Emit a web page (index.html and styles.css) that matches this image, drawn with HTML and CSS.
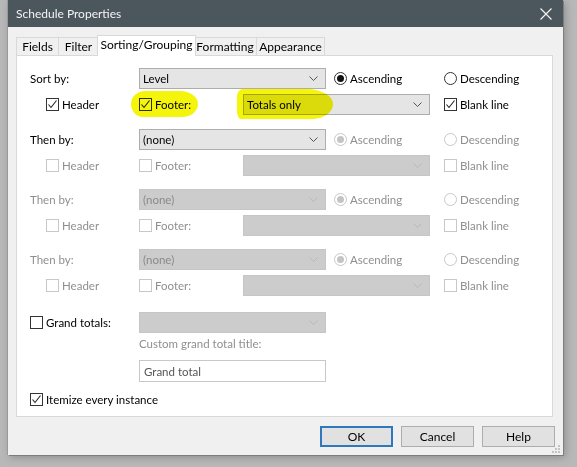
FILE: index.html
```html
<!DOCTYPE html>
<html>
<head>
<meta charset="utf-8">
<link rel="stylesheet" href="styles.css">
</head>
<body>
<div class="window">
  <div class="titlebar">
    <span class="title">Schedule Properties</span>
    <svg class="close" width="12" height="12" viewBox="0 0 12 12"><path d="M0.5 0.5 L11.5 11.5 M11.5 0.5 L0.5 11.5" stroke="#f2f2f2" stroke-width="1.2" fill="none"/></svg>
  </div>
  <div class="tabs">
    <div class="tab w-fields">Fields</div>
    <div class="tab w-filter">Filter</div>
    <div class="tab sel w-sort">Sorting/Grouping</div>
    <div class="tab w-fmt">Formatting</div>
    <div class="tab w-app">Appearance</div>
  </div>
  <div class="panel">
    <div class="hl hl1"></div>
    <div class="hl hl2"></div>

    <div class="group g1">
      <span class="lbl c12">Sort by:</span>
      <div class="dd c34"><span>Level</span><svg class="arr" width="9" height="5" viewBox="0 0 9 5"><path d="M0.5 0.5 L4.5 4.5 L8.5 0.5" stroke="#555" fill="none"/></svg></div>
      <span class="opt c6"><span class="radio on"></span>Ascending</span>
      <span class="opt c8"><span class="radio"></span>Descending</span>
      <span class="opt c2"><span class="chk"><svg width="11" height="11" viewBox="0 0 11 11"><path d="M1.5 5.5 L4 8.5 L9.5 1.5" stroke="#222" stroke-width="1.1" fill="none"/></svg></span>Header</span>
      <span class="opt c3"><span class="chk"><svg width="11" height="11" viewBox="0 0 11 11"><path d="M1.5 5.5 L4 8.5 L9.5 1.5" stroke="#222" stroke-width="1.1" fill="none"/></svg></span>Footer:</span>
      <div class="dd c46"><span>Totals only</span><svg class="arr" width="9" height="5" viewBox="0 0 9 5"><path d="M0.5 0.5 L4.5 4.5 L8.5 0.5" stroke="#555" fill="none"/></svg></div>
      <span class="opt c8"><span class="chk"><svg width="11" height="11" viewBox="0 0 11 11"><path d="M1.5 5.5 L4 8.5 L9.5 1.5" stroke="#222" stroke-width="1.1" fill="none"/></svg></span>Blank line</span>
    </div>

    <div class="group">
      <span class="lbl c12">Then by:</span>
      <div class="dd c34"><span>(none)</span><svg class="arr" width="9" height="5" viewBox="0 0 9 5"><path d="M0.5 0.5 L4.5 4.5 L8.5 0.5" stroke="#555" fill="none"/></svg></div>
      <span class="opt dis c6"><span class="radio on"></span>Ascending</span>
      <span class="opt dis c8"><span class="radio"></span>Descending</span>
      <span class="opt dis c2"><span class="chk"></span>Header</span>
      <span class="opt dis c3"><span class="chk"></span>Footer:</span>
      <div class="dd off c46"><span></span><svg class="arr" width="9" height="5" viewBox="0 0 9 5"><path d="M0.5 0.5 L4.5 4.5 L8.5 0.5" stroke="#b8b8b8" fill="none"/></svg></div>
      <span class="opt dis c8"><span class="chk"></span>Blank line</span>
    </div>

    <div class="group">
      <span class="lbl dis c12">Then by:</span>
      <div class="dd off c34"><span>(none)</span><svg class="arr" width="9" height="5" viewBox="0 0 9 5"><path d="M0.5 0.5 L4.5 4.5 L8.5 0.5" stroke="#b8b8b8" fill="none"/></svg></div>
      <span class="opt dis c6"><span class="radio on"></span>Ascending</span>
      <span class="opt dis c8"><span class="radio"></span>Descending</span>
      <span class="opt dis c2"><span class="chk"></span>Header</span>
      <span class="opt dis c3"><span class="chk"></span>Footer:</span>
      <div class="dd off c46"><span></span><svg class="arr" width="9" height="5" viewBox="0 0 9 5"><path d="M0.5 0.5 L4.5 4.5 L8.5 0.5" stroke="#b8b8b8" fill="none"/></svg></div>
      <span class="opt dis c8"><span class="chk"></span>Blank line</span>
    </div>

    <div class="group last">
      <span class="lbl dis c12">Then by:</span>
      <div class="dd off c34"><span>(none)</span><svg class="arr" width="9" height="5" viewBox="0 0 9 5"><path d="M0.5 0.5 L4.5 4.5 L8.5 0.5" stroke="#b8b8b8" fill="none"/></svg></div>
      <span class="opt dis c6"><span class="radio on"></span>Ascending</span>
      <span class="opt dis c8"><span class="radio"></span>Descending</span>
      <span class="opt dis c2"><span class="chk"></span>Header</span>
      <span class="opt dis c3"><span class="chk"></span>Footer:</span>
      <div class="dd off c46"><span></span><svg class="arr" width="9" height="5" viewBox="0 0 9 5"><path d="M0.5 0.5 L4.5 4.5 L8.5 0.5" stroke="#b8b8b8" fill="none"/></svg></div>
      <span class="opt dis c8"><span class="chk"></span>Blank line</span>
    </div>

    <div class="grand">
      <span class="opt c12"><span class="chk"></span>Grand totals:</span>
      <div class="dd off c34"><span></span><svg class="arr" width="9" height="5" viewBox="0 0 9 5"><path d="M0.5 0.5 L4.5 4.5 L8.5 0.5" stroke="#b8b8b8" fill="none"/></svg></div>
      <span class="lbl dis c34 r2">Custom grand total title:</span>
      <div class="tb c34 r3">Grand total</div>
      <span class="opt c18 r4"><span class="chk"><svg width="11" height="11" viewBox="0 0 11 11"><path d="M1.5 5.5 L4 8.5 L9.5 1.5" stroke="#222" stroke-width="1.1" fill="none"/></svg></span>Itemize every instance</span>
    </div>
  </div>
  <div class="buttons">
    <div class="btn def">OK</div>
    <div class="btn">Cancel</div>
    <div class="btn">Help</div>
  </div>
  <svg class="grip" width="9" height="9" viewBox="0 0 9 9"><g fill="#c4c4c4"><rect x="6" y="0" width="2" height="2"/><rect x="3" y="3" width="2" height="2"/><rect x="6" y="3" width="2" height="2"/><rect x="0" y="6" width="2" height="2"/><rect x="3" y="6" width="2" height="2"/><rect x="6" y="6" width="2" height="2"/></g></svg>
</div>
</body>
</html>
```
FILE: styles.css
```css
html, body { margin: 0; padding: 0; }
body {
  background: #b8b8b8;
  width: 577px; height: 467px; overflow: hidden;
  font-family: Lato, "Noto Sans", sans-serif;
  font-size: 11.5px;
  color: #000;
}
.window {
  position: relative;
  margin-left: 8px;
  width: 555px; height: 455px;
  background: #f0f0f0;
  display: flex; flex-direction: column;
  box-shadow: 1px 1px 0 #7d7d7d, -1px 0 0 #9a9a9a, 2px 2px 8px rgba(0,0,0,0.25);
}
.titlebar {
  height: 27px; flex: none;
  background: #4c565d;
  display: flex; align-items: center; justify-content: space-between;
  padding: 0 11px 0 8px;
  color: #f4f4f4; font-size: 12px;
}
.title { padding-bottom: 1px; }
.tabs {
  display: flex; align-items: flex-end;
  height: 20px; margin: 8px 0 0 8px; flex: none;
  position: relative; z-index: 2;
  font-size: 12px;
}
.tab {
  box-sizing: border-box; height: 18px;
  border: 1px solid #d9d9d9; border-bottom: none;
  margin-left: -1px;
  display: flex; align-items: center; justify-content: center;
  background: #f0f0f0; line-height: 1;
}
.tab:first-child { margin-left: 0; }
.tab.sel { height: 21px; background: #fff; margin-bottom: -1px; position: relative; margin-left: -2px; margin-right: -2px; z-index: 1; padding-bottom: 3px; }
.w-fields { width: 43px; }
.w-filter { width: 41px; }
.w-sort { width: 99px; }
.w-fmt { width: 64px; }
.w-app { width: 69px; }
.panel {
  position: relative;
  box-sizing: border-box;
  height: 362px; flex: none;
  margin: 0 10px 0 8px;
  border: 1px solid #d9d9d9;
  background: #fff;
  padding: 12px 0 0 13px;
}
.group, .grand {
  display: grid;
  grid-template-columns: 16px 93px 104px 83px 8px 96px 14px 1fr;
  grid-template-rows: 21px 21px;
  row-gap: 5px;
  margin-bottom: 13px;
  align-items: center;
}
.group.g1 { margin-bottom: 14px; }
.group.last { margin-bottom: 0; }
.grand {
  margin-top: 16px;
  grid-template-rows: 21px 27px 22px 24px;
  row-gap: 0;
}
.c12 { grid-column: 1 / 3; }
.c2 { grid-column: 2 / 3; }
.c3 { grid-column: 3 / 4; }
.c34 { grid-column: 3 / 5; }
.c46 { grid-column: 4 / 7; }
.c6 { grid-column: 6 / 7; }
.c8 { grid-column: 8 / 9; }
.c18 { grid-column: 1 / 9; }
.r2 { grid-row: 2; align-self: start; margin-top: 4px; }
.r3 { grid-row: 3; }
.r4 { grid-row: 4; align-self: end; height: 14px; }
.lbl { white-space: nowrap; }
.dis { color: #8f8f8f; }
.dd {
  box-sizing: border-box; height: 21px;
  border: 1px solid #adadad; background: #e5e5e5;
  display: flex; align-items: center; justify-content: space-between;
  padding: 0 7px 0 3px;
}
.dd.off { border-color: #c6c6c6; background: #cccccc; color: #8a8a8a; }
.tb {
  box-sizing: border-box; height: 22px;
  border: 1px solid #c8c8c8; background: #fff;
  display: flex; align-items: center; padding-left: 4px; color: #555;
}
.opt { display: flex; align-items: center; white-space: nowrap; }
.chk {
  box-sizing: border-box; width: 13px; height: 13px; flex: none;
  border: 1px solid #333; background: #fff; margin-right: 3px;
  display: flex; align-items: center; justify-content: center;
}
.dis .chk { border-color: #c8c8c8; }
.radio {
  box-sizing: border-box; width: 13px; height: 13px; flex: none;
  border: 1px solid #333; border-radius: 50%; background: #fff;
  margin-right: 3px; position: relative;
}
.radio.on::after {
  content: ""; position: absolute; left: 2px; top: 2px;
  width: 7px; height: 7px; border-radius: 50%; background: #111;
}
.dis .radio { border-color: #c8c8c8; }
.dis .radio.on::after { background: #c4c4c4; }
.hl {
  position: absolute; background: #f4f40c; mix-blend-mode: multiply; z-index: 3;
  pointer-events: none;
}
.hl1 { left: 114px; top: 35px; width: 67px; height: 26px; border-radius: 14px 18px 16px 12px / 13px 13px 13px 13px; }
.hl2 { left: 220px; top: 33px; width: 96px; height: 30px; border-radius: 6px 26px 20px 4px / 8px 15px 15px 8px; }
.buttons {
  display: flex; justify-content: flex-end; gap: 8px;
  margin-top: 9px; padding-right: 8px; flex: none;
  font-size: 12px;
}
.btn {
  box-sizing: border-box; width: 73px; height: 21px;
  border: 1px solid #adadad; background: #e1e1e1;
  display: flex; align-items: center; justify-content: center;
}
.btn.def { border: 2px solid #2f78bd; }
.grip { position: absolute; right: 2px; bottom: 1px; }
```
